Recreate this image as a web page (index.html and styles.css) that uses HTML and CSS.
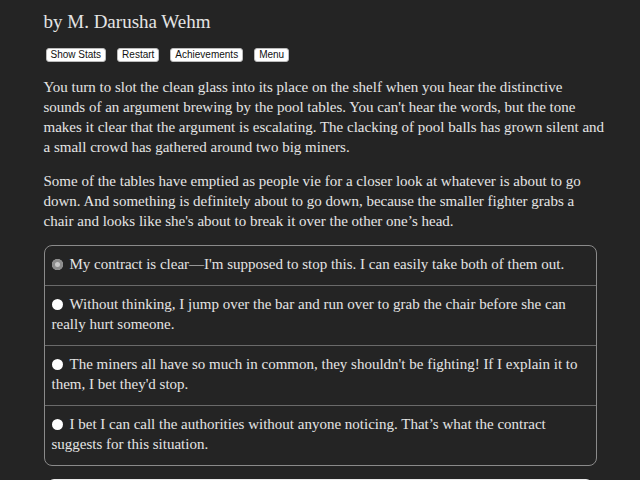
FILE: index.html
```html
<!DOCTYPE html>
<html lang="en">
<head>
    <meta charset="UTF-8">
    <title>Choice of Games</title>
    <link rel="stylesheet" href="styles.css">
</head>
<body>
<div class="container">
    <div class="byline">by M. Darusha Wehm</div>
    <div class="buttons">
        <button class="small-button">Show Stats</button>
        <button class="small-button">Restart</button>
        <button class="small-button">Achievements</button>
        <button class="small-button">Menu</button>
    </div>
    <div class="story">
        <p>You turn to slot the clean glass into its place on the shelf when you hear the distinctive sounds of an argument brewing by the pool tables. You can't hear the words, but the tone makes it clear that the argument is escalating. The clacking of pool balls has grown silent and a small crowd has gathered around two big miners.</p>
        <p>Some of the tables have emptied as people vie for a closer look at whatever is about to go down. And something is definitely about to go down, because the smaller fighter grabs a chair and looks like she's about to break it over the other one&rsquo;s head.</p>
    </div>
    <div class="choices">
        <label class="choice"><span class="radio checked"></span>My contract is clear&mdash;I'm supposed to stop this. I can easily take both of them out.</label>
        <label class="choice"><span class="radio"></span>Without thinking, I jump over the bar and run over to grab the chair before she can really hurt someone.</label>
        <label class="choice"><span class="radio"></span>The miners all have so much in common, they shouldn't be fighting! If I explain it to them, I bet they'd stop.</label>
        <label class="choice"><span class="radio"></span>I bet I can call the authorities without anyone noticing. That&rsquo;s what the contract suggests for this situation.</label>
    </div>
    <button class="next-button">Next</button>
</div>
</body>
</html>
```

FILE: styles.css
```css
body {
    margin: 0;
    padding: 0;
    background: #242424;
    color: #e4e4e4;
    font-family: 'Liberation Serif', serif;
    font-size: 15px;
    line-height: 20px;
    overflow: hidden;
}
.container {
    width: 553px;
    margin: 0 auto;
    padding-top: 10px;
}
.byline {
    font-size: 19px;
    line-height: 24px;
}
.buttons {
    display: flex;
    gap: 11px;
    margin: 14px 0 0 2px;
}
.small-button {
    font-family: 'Liberation Sans', sans-serif;
    font-size: 10px;
    line-height: 12px;
    padding: 0 4px;
    background: #fff;
    color: #111;
    border: 1px solid #bbb;
    border-radius: 3px;
}
/* story text runs a little wider than the choice box */
.story {
    width: 563px;
    padding-top: 1px;
}
.story p {
    margin: 14px 0;
}
.choices {
    border: 1px solid #8a8a8a;
    border-radius: 8px;
    margin-top: 11px;
}
.choice {
    display: block;
    padding: 8px 8px 11px 7px;
    border-top: 1px solid #6a6a6a;
}
.choice:first-child {
    border-top: none;
}
.radio {
    display: inline-block;
    width: 11px;
    height: 11px;
    border-radius: 50%;
    background: #fff;
    margin-right: 7px;
    vertical-align: -1px;
}
.radio.checked {
    background: #c8c8c8;
    box-shadow: inset 0 0 0 3px #8c8c8c;
}
.next-button {
    display: block;
    width: 544px;
    margin: 13px auto 0;
    height: 30px;
    background: #ececec;
    border: none;
    border-radius: 6px;
}
```
